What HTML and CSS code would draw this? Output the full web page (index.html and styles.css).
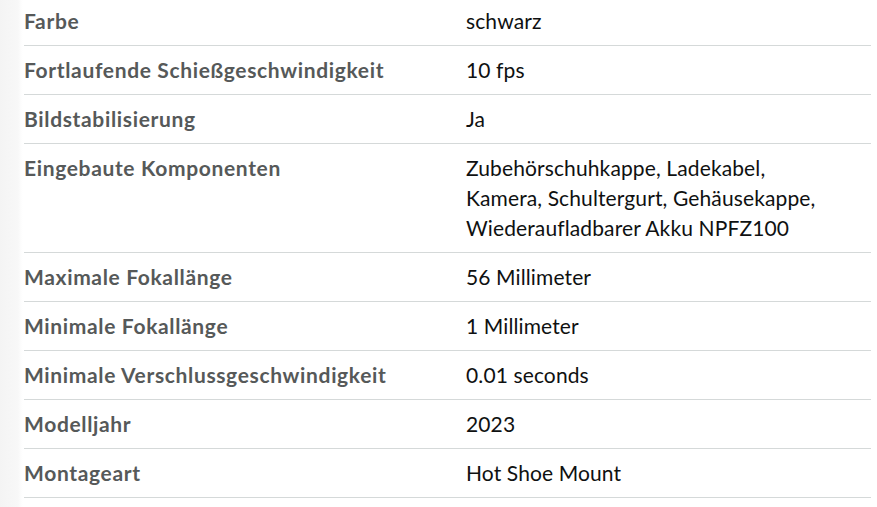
FILE: index.html
```html
<!DOCTYPE html>
<html lang="de">
<head>
<meta charset="utf-8">
<link rel="stylesheet" href="styles.css">
</head>
<body>
<div class="specs">
  <div class="row"><div class="label">Farbe</div><div class="value">schwarz</div></div>
  <div class="row"><div class="label">Fortlaufende Schießgeschwindigkeit</div><div class="value">10 fps</div></div>
  <div class="row"><div class="label">Bildstabilisierung</div><div class="value">Ja</div></div>
  <div class="row"><div class="label">Eingebaute Komponenten</div><div class="value">Zubehörschuhkappe, Ladekabel,<br>Kamera, Schultergurt, Gehäusekappe,<br>Wiederaufladbarer Akku NPFZ100</div></div>
  <div class="row"><div class="label">Maximale Fokallänge</div><div class="value">56 Millimeter</div></div>
  <div class="row"><div class="label">Minimale Fokallänge</div><div class="value">1 Millimeter</div></div>
  <div class="row"><div class="label">Minimale Verschlussgeschwindigkeit</div><div class="value">0.01 seconds</div></div>
  <div class="row"><div class="label">Modelljahr</div><div class="value">2023</div></div>
  <div class="row"><div class="label">Montageart</div><div class="value">Hot Shoe Mount</div></div>
</div>
</body>
</html>
```
FILE: styles.css
```css
html, body {
  margin: 0;
  height: 100%;
  overflow: hidden;
}
body {
  background: linear-gradient(to right, #f4f4f4 0, #f8f8f8 18px, #fdfdfd 21px, #ffffff 23px);
  padding: 0 6px 0 24px;
  font-family: Lato, "Open Sans", sans-serif;
  font-size: 21px;
  line-height: 30px;
}
.specs {
  margin-top: -3px;
  background: #fff;
}
.row {
  display: grid;
  grid-template-columns: 442px 1fr;
  padding: 9px 0;
  border-bottom: 1px solid #d5d9d9;
}
.label {
  font-weight: 700;
  color: #565959;
  letter-spacing: 0.65px;
}
.value {
  color: #0f1111;
  letter-spacing: 0.12px;
}
```
